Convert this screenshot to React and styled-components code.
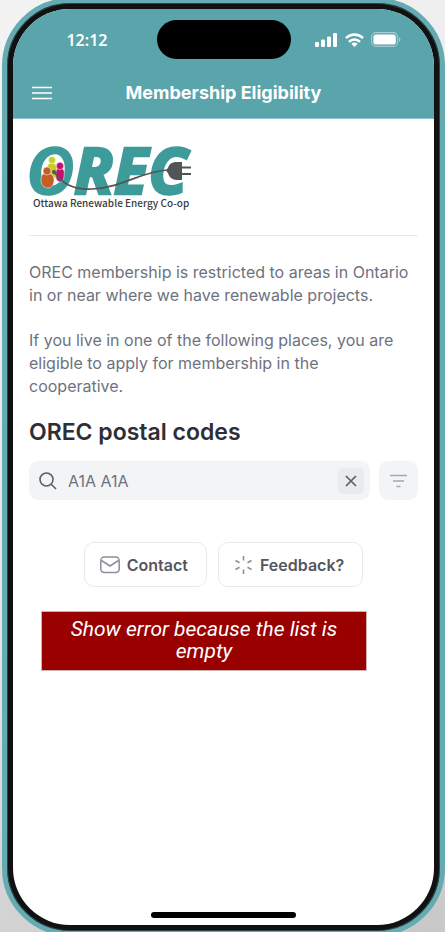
import React, { useState } from 'react';
import styled, { createGlobalStyle } from 'styled-components';

const GlobalStyle = createGlobalStyle`
  * {
    box-sizing: border-box;
  }

  body {
    margin: 0;
    background: #e4e4e4;
    font-family: Inter, 'Liberation Sans', sans-serif;
  }

  h1, h2, p {
    margin: 0;
  }

  button, input {
    font-family: inherit;
  }
`;

const Page = styled.div`
  background: linear-gradient(160deg, #f3f3f3, #e4e4e4 60%, #c8c8c8);
  display: flex;
  min-height: 100vh;
  overflow: hidden;
`;

const Phone = styled.div`
  background: #111;
  border: 5px solid #66abb1;
  border-radius: 68px;
  box-shadow: inset 0 0 0 1px #25474a;
  display: flex;
  flex: 1;
  margin: -2px 0 -4px 2px;
  padding: 6px;
`;

const Screen = styled.div`
  background: #fff;
  border-radius: 57px;
  display: flex;
  flex: 1;
  flex-direction: column;
  min-width: 0;
  overflow: hidden;
`;

const Header = styled.header`
  background: #5aa4ab;
  border-bottom: 1px solid #8fc2c6;
  color: #fff;
`;

const StatusBar = styled.div`
  align-items: center;
  display: grid;
  grid-template-columns: 1fr 134px 1fr;
  padding: 11px 0 8px;
`;

const Time = styled.span`
  font-family: 'Noto Sans', sans-serif;
  font-size: 16px;
  font-weight: 600;
  justify-self: end;
  line-height: 24px;
  padding-right: 49px;
`;

const Island = styled.div`
  background: #000;
  border-radius: 20px;
  height: 39px;
`;

const StatusIcons = styled.div`
  align-items: center;
  display: flex;
  gap: 7px;
  padding-left: 24px;
`;

const AppBar = styled.div`
  align-items: center;
  display: grid;
  grid-template-columns: 20px 1fr 20px;
  height: 51px;
  padding: 0 19px;
`;

const MenuButton = styled.button`
  background: none;
  border: 0;
  color: inherit;
  display: flex;
  padding: 0;
`;

const Title = styled.h1`
  font-size: 18px;
  font-weight: 700;
  line-height: 24px;
  text-align: center;
`;

const Content = styled.main`
  padding: 24px 16px;
`;

const LogoBox = styled.div`
  border-bottom: 1px solid #e9eaec;
  display: flex;
  margin-bottom: 25px;
  padding-bottom: 24px;

  svg {
    overflow: visible;
  }
`;

const Intro = styled.div`
  color: #6e727e;
  display: grid;
  font-size: 16px;
  gap: 22px;
  line-height: 23px;
  padding-right: 6px;
`;

const Heading = styled.h2`
  color: #2e2e38;
  font-size: 23px;
  font-weight: 600;
  line-height: 30px;
  margin: 19px 0 14px;
`;

const SearchRow = styled.form`
  display: flex;
  gap: 9px;
`;

const SearchBox = styled.label`
  align-items: center;
  background: #f3f4f6;
  border-radius: 9px;
  color: #5c5f69;
  display: flex;
  flex: 1;
  gap: 11px;
  height: 39px;
  min-width: 0;
  padding: 0 6px 0 10px;
`;

const SearchInput = styled.input`
  background: none;
  border: 0;
  color: #6e727e;
  flex: 1;
  font-size: 16px;
  min-width: 0;
  outline: none;
  padding: 0;
`;

const IconButton = styled.button`
  align-items: center;
  background: ${props => props.$bg};
  border: 0;
  border-radius: ${props => props.$radius}px;
  color: ${props => props.$color};
  display: flex;
  height: ${props => props.$size}px;
  justify-content: center;
  padding: 0;
  width: ${props => props.$size}px;
`;

const Actions = styled.div`
  display: flex;
  gap: 11px;
  justify-content: center;
  margin: 42px 0 24px;
`;

const ActionButton = styled.button`
  align-items: center;
  background: #fff;
  border: 1px solid #e9eaec;
  border-radius: 10px;
  color: #55565f;
  display: flex;
  font-size: 16px;
  font-weight: 600;
  gap: 7px;
  height: 45px;
  padding: 0 18px 0 15px;

  svg {
    color: #8b8e9b;
  }
`;

const ErrorBox = styled.p`
  background: #990000;
  border: 1px solid #d3b4b4;
  color: #fff;
  font-family: Roboto, sans-serif;
  font-size: 21px;
  font-style: italic;
  line-height: 22px;
  margin: 0 51px 0 12px;
  padding: 6px 24px 8px;
  text-align: center;
`;

const HomeBar = styled.div`
  background: #000;
  border-radius: 3px;
  height: 6px;
  margin: auto auto 7px;
  width: 145px;
`;

const Signal = () => (
  <svg width="23" height="14" viewBox="0 0 23 14" fill="#fff">
    <rect x="0" y="9" width="4" height="5" rx="1.2" />
    <rect x="6" y="6.5" width="4" height="7.5" rx="1.2" />
    <rect x="12" y="3.5" width="4" height="10.5" rx="1.2" />
    <rect x="18" y="0" width="4" height="14" rx="1.2" />
  </svg>
);

const Wifi = () => (
  <svg width="19" height="14" viewBox="0 0 19 14" fill="none" stroke="#fff" strokeWidth="2.6">
    <path d="M1 5.2a12 12 0 0 1 17 0" />
    <path d="M4 8.8a7.8 7.8 0 0 1 11 0" />
    <path d="M9.5 14L6.3 10.8a4.5 4.5 0 0 1 6.4 0z" fill="#fff" stroke="none" />
  </svg>
);

const Battery = () => (
  <svg width="30" height="15" viewBox="0 0 30 15">
    <rect x="0.6" y="0.6" width="26" height="13.8" rx="4.2" fill="none" stroke="#a5cdd1" strokeWidth="1.1" />
    <rect x="2.4" y="2.4" width="22.4" height="10.2" rx="2.6" fill="#fff" />
    <path d="M28 5.2v4.6c1.9-.8 1.9-3.800 0-4.600z" fill="#a5cdd1" />
  </svg>
);

const Logo = () => (
  <svg width="166" height="68" viewBox="0 0 166 68" role="img" aria-label="OREC">
    <text
      x="-2"
      y="51"
      fill="#3d9b9a"
      stroke="#3d9b9a"
      strokeWidth="2.5"
      fontFamily="'Noto Sans', sans-serif"
      fontSize="64"
      fontStyle="italic"
      fontWeight="700"
    >
      OREC
    </text>
    <ellipse cx="24" cy="27" rx="11.5" ry="16" transform="rotate(12 24 27)" fill="#fff" />
    <g stroke="#fff" strokeWidth="0.5">
      <path d="M18 29c-1-7 2-9 5-9s5 2 5 7v8h-9z" fill="#c5cf23" />
      <circle cx="23" cy="17" r="3.5" fill="#c5cf23" />
      <path d="M27 35c-1-8 1-10 4-10s5 2 4 8c0 3-1 5-3 6-3 0-5-2-5-4z" fill="#c2116b" />
      <circle cx="31" cy="23" r="3.7" fill="#c2116b" />
      <path d="M12 37c0-6 3-7 6-7s7 2 7 7c0 4-2 8-6 8s-7-3-7-8z" fill="#c55d25" />
      <circle cx="18" cy="28" r="4" fill="#c55d25" />
    </g>
    <path d="M25 29c8 11 18 18 38 17 29-1 50-18 76-19" fill="none" stroke="#535456" strokeWidth="1.7" />
    <circle cx="25" cy="29" r="2" fill="#535456" />
    <path d="M153 19v18h-5c-5 0-8-3-9-7-2-1-2-4 0-5 1-4 4-6 9-6z" fill="#535456" />
    <path d="M153 24.5h9M153 31h9" stroke="#fff" strokeWidth="4.5" />
    <path d="M153 24.5h9M153 31h9" stroke="#535456" strokeWidth="2" />
    <text
      x="4"
      y="64"
      fill="#3c3c3e"
      fontFamily="'Noto Sans CJK SC', sans-serif"
      fontSize="10"
      fontWeight="500"
    >
      Ottawa Renewable Energy Co-op
    </text>
  </svg>
);

const MailIcon = () => (
  <svg width="20" height="18" viewBox="0 0 20 18" fill="none" stroke="currentColor" strokeWidth="1.5">
    <rect x="0.8" y="1" width="18.4" height="15.5" rx="3.5" />
    <path d="M1.5 4.5L10 10l8.5-5.5" />
  </svg>
);

const SparkIcon = () => (
  <svg width="19" height="20" viewBox="0 0 19 20" stroke="currentColor" strokeWidth="1.6">
    <path d="M9.5 1v4.5M9.5 14.5V19M1.5 5.5l4 2.2M13.5 12.3l4 2.2M1.5 14.5l4-2.2M13.5 7.7l4-2.2" />
  </svg>
);

const App = () => {
  const [code, setCode] = useState('A1A A1A');

  return (
    <Page>
      <GlobalStyle />
      <Phone>
        <Screen>
          <Header>
            <StatusBar>
              <Time>12:12</Time>
              <Island />
              <StatusIcons>
                <Signal />
                <Wifi />
                <Battery />
              </StatusIcons>
            </StatusBar>
            <AppBar>
              <MenuButton aria-label="Menu">
                <svg width="20" height="14" viewBox="0 0 20 14" stroke="currentColor" strokeWidth="1.5">
                  <path d="M0 1.5h20M0 7h20M0 12.5h20" />
                </svg>
              </MenuButton>
              <Title>Membership Eligibility</Title>
            </AppBar>
          </Header>

          <Content>
            <LogoBox>
              <Logo />
            </LogoBox>
            <Intro>
              <p>
                OREC membership is restricted to areas in Ontario in or near where we have renewable
                projects.
              </p>
              <p>
                If you live in one of the following places, you are eligible to apply for membership
                in the cooperative.
              </p>
            </Intro>

            <Heading>OREC postal codes</Heading>
            <SearchRow onSubmit={e => e.preventDefault()}>
              <SearchBox>
                <svg width="18" height="18" viewBox="0 0 18 18" fill="none" stroke="currentColor" strokeWidth="1.6">
                  <circle cx="7.5" cy="7.5" r="6.5" />
                  <path d="M12.2 12.2l4.8 4.8" />
                </svg>
                <SearchInput
                  aria-label="Postal code"
                  value={code}
                  onChange={e => setCode(e.target.value)}
                />
                <IconButton
                  type="button"
                  aria-label="Clear"
                  $bg="#eaebed"
                  $color="#5c5f69"
                  $radius={5}
                  $size={26}
                  onClick={() => setCode('')}
                >
                  <svg width="12" height="12" viewBox="0 0 12 12" stroke="currentColor" strokeWidth="1.7">
                    <path d="M1 1l10 10M11 1L1 11" />
                  </svg>
                </IconButton>
              </SearchBox>
              <IconButton
                type="button"
                aria-label="Filter"
                $bg="#f3f4f6"
                $color="#a6a7b3"
                $radius={9}
                $size={39}
              >
                <svg width="17" height="14" viewBox="0 0 17 14" stroke="currentColor" strokeWidth="1.7">
                  <path d="M0 1.5h17M3 7h11M6.5 12.5h4" />
                </svg>
              </IconButton>
            </SearchRow>

            <Actions>
              <ActionButton>
                <MailIcon />
                Contact
              </ActionButton>
              <ActionButton>
                <SparkIcon />
                Feedback?
              </ActionButton>
            </Actions>
            <ErrorBox role="alert">Show error because the list is empty</ErrorBox>
          </Content>
          <HomeBar />
        </Screen>
      </Phone>
    </Page>
  );
};

export default App;
